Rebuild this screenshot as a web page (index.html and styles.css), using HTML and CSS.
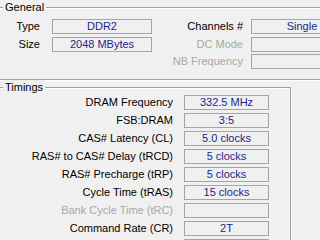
FILE: index.html
```html
<!DOCTYPE html>
<html lang="en">
<head>
  <meta charset="UTF-8">
  <title>Memory - CPU-Z</title>
  <link rel="stylesheet" href="styles.css">
</head>
<body>
  <fieldset class="group general">
    <legend>General</legend>
    <div class="general-grid">
      <span class="label">Type</span>
      <span class="field">DDR2</span>
      <span class="label label-right">Channels #</span>
      <span class="field">Single</span>

      <span class="label">Size</span>
      <span class="field">2048 MBytes</span>
      <span class="label label-right disabled">DC Mode</span>
      <span class="field"></span>

      <span class="label label-right disabled nb">NB Frequency</span>
      <span class="field"></span>
    </div>
  </fieldset>

  <fieldset class="group timings">
    <legend>Timings</legend>
    <div class="timings-grid">
      <span class="label">DRAM Frequency</span>
      <span class="field">332.5 MHz</span>

      <span class="label">FSB:DRAM</span>
      <span class="field">3:5</span>

      <span class="label">CAS# Latency (CL)</span>
      <span class="field">5.0 clocks</span>

      <span class="label">RAS# to CAS# Delay (tRCD)</span>
      <span class="field">5 clocks</span>

      <span class="label">RAS# Precharge (tRP)</span>
      <span class="field">5 clocks</span>

      <span class="label">Cycle Time (tRAS)</span>
      <span class="field">15 clocks</span>

      <span class="label disabled">Bank Cycle Time (tRC)</span>
      <span class="field"></span>

      <span class="label">Command Rate (CR)</span>
      <span class="field">2T</span>

      <span class="label"></span>
      <span class="field"></span>
    </div>
  </fieldset>
</body>
</html>
```

FILE: styles.css
```css
html, body {
  margin: 0;
  padding: 0;
  background-color: #f0f0f0;
  overflow: hidden;
}

body {
  width: 320px;
  height: 240px;
  font-family: "Liberation Sans", Arial, sans-serif;
  font-size: 11px;
  color: #000;
}

.group {
  margin: 0 0 0 -2px;
  padding: 0 0 0 1px;
  border: 1px solid #a0a0a0;
  box-shadow: inset 1px 1px 0 #fff, 1px 1px 0 #fff;
  box-sizing: border-box;
}

.group legend {
  margin-left: 3px;
  padding: 0 2px;
  line-height: 15px;
  background-color: #f0f0f0;
}

.general {
  width: 420px;
  padding-top: 4px;
  padding-bottom: 10px;
}

.timings {
  width: 293px;
  height: 200px;
  margin-top: 0;
}

.general-grid {
  display: grid;
  grid-template-columns: 52px 100px 99px 102px;
  grid-auto-rows: 15px;
  row-gap: 2.5px;
}

.timings-grid {
  display: grid;
  grid-template-columns: 184px 85px;
  grid-auto-rows: 15px;
  row-gap: 3px;
}

.label {
  line-height: 15px;
  text-align: right;
  white-space: nowrap;
  padding-right: 12px;
}

.label-right {
  padding-right: 8px;
}

.timings-grid .label {
  padding-right: 11px;
}

.nb {
  grid-column: 3;
}

.disabled {
  color: #a8a8a8;
}

.field {
  box-sizing: border-box;
  height: 15px;
  line-height: 13px;
  border: 1px solid #a5a5a5;
  text-align: center;
  color: #1e1e8c;
  white-space: nowrap;
  overflow: hidden;
}
```
